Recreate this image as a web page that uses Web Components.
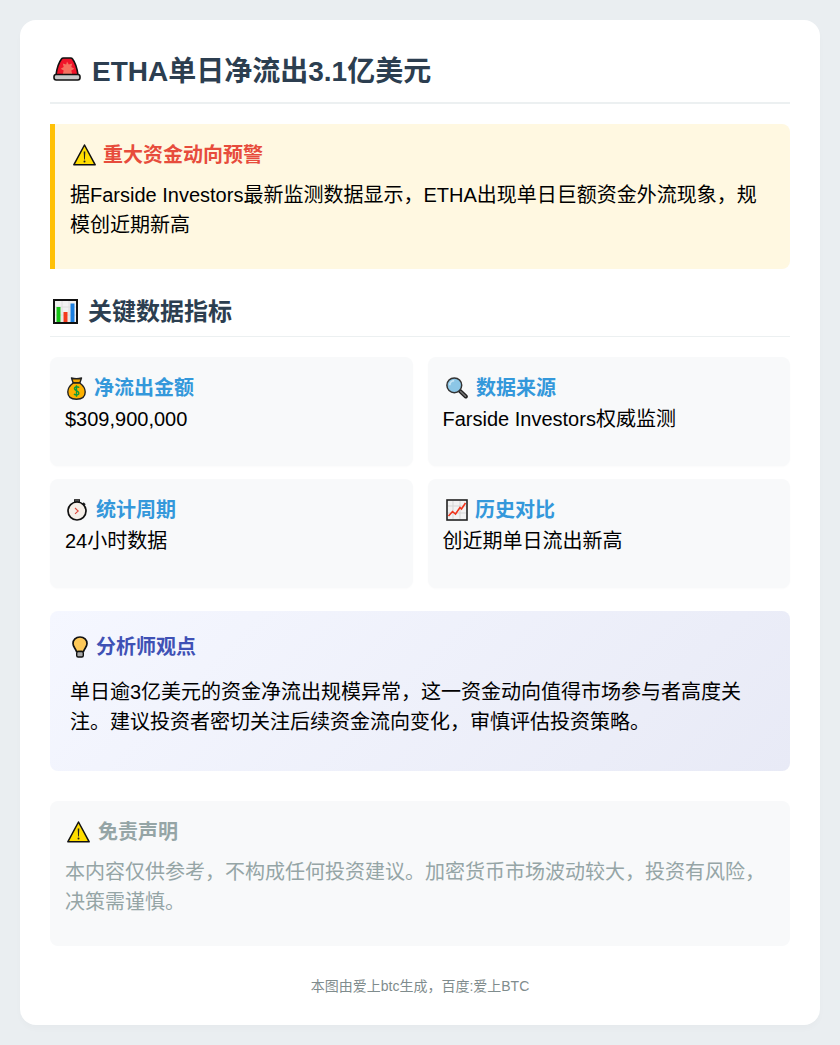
<!DOCTYPE html>
<html lang="zh">
<head>
<meta charset="utf-8">
<title>ETHA单日净流出3.1亿美元</title>
<style>
  html, body { margin: 0; }
  body {
    background: #eaeef1;
    padding: 20px;
    font-family: "Liberation Sans", "Noto Sans CJK SC", sans-serif;
    font-size: 20px;
    color: #000;
  }
</style>
</head>
<body>
<report-card>
  <report-title slot="title" icon="siren">ETHA单日净流出3.1亿美元</report-title>

  <alert-box>
    <span slot="title">重大资金动向预警</span>
    据Farside Investors最新监测数据显示，ETHA出现单日巨额资金外流现象，规模创近期新高
  </alert-box>

  <section-head icon="chart">关键数据指标</section-head>

  <stat-grid>
    <stat-item icon="money" inset="2" gap="8" label="净流出金额">$309,900,000</stat-item>
    <stat-item icon="search" inset="3" gap="8.5" label="数据来源">Farside Investors权威监测</stat-item>
    <stat-item icon="timer" inset="2" gap="9" label="统计周期">24小时数据</stat-item>
    <stat-item icon="trend" inset="3" gap="7.5" label="历史对比">创近期单日流出新高</stat-item>
  </stat-grid>

  <analyst-box>
    <span slot="title">分析师观点</span>
    单日逾3亿美元的资金净流出规模异常，这一资金动向值得市场参与者高度关注。建议投资者密切关注后续资金流向变化，审慎评估投资策略。
  </analyst-box>

  <disclaimer-box>
    <span slot="title">免责声明</span>
    本内容仅供参考，不构成任何投资建议。加密货币市场波动较大，投资有风险，决策需谨慎。
  </disclaimer-box>

  <report-footer>本图由爱上btc生成，百度:爱上BTC</report-footer>
</report-card>

<script>
const ICONS = {
  siren: `<svg viewBox="0 0 28 24" width="28" height="24">
    <path d="M8.500 2Q9 1 10.500 1H17.500Q19 1 19.500 2Q23.500 7 25 18H3Q4.500 7 8.500 2Z" fill="#f0142a" stroke="#111" stroke-width="1.600" stroke-linejoin="round"/>
    <path d="M14 4.500l1.800 3 3.400-1-.9 3.400 3 1.800-3 1.800.9 3.500H9.800l.9-3.500-3-1.800 3-1.800-.9-3.400 3.400 1z" fill="#f6705f"/>
    <rect x="1" y="17.500" width="26" height="5.500" rx="2.200" fill="#c9c9c9" stroke="#111" stroke-width="1.600"/>
  </svg>`,
  warn: `<svg viewBox="0 0 23 22" width="23" height="22">
    <path d="M11.500 1L22.200 20.800H.8Z" fill="#ffdd00" stroke="#111" stroke-width="1.500" stroke-linejoin="round"/>
    <path d="M10.700 7.500h1.600l-.4 8h-.8z" fill="#222"/><circle cx="11.500" cy="17.600" r="1" fill="#222"/>
  </svg>`,
  chart: `<svg viewBox="0 0 25 25" width="25" height="25">
    <rect x="1" y="1" width="23" height="23" fill="#f1f1f1" stroke="#111" stroke-width="2"/>
    <path d="M2 8H23M2 16H23M9 2V23M16 2V23" stroke="#dedede" stroke-width="1"/>
    <rect x="3.500" y="8" width="4" height="15" fill="#18c418"/>
    <rect x="10.500" y="13" width="4" height="10" fill="#f43a1c"/>
    <rect x="17.500" y="4.500" width="4" height="18.500" fill="#1b7fe0"/>
  </svg>`,
  money: `<svg viewBox="0 0 19 23" width="19" height="23">
    <path d="M4.500 1Q9.500 2.600 14.500 1L12.800 6H6.200Z" fill="#f5a800" stroke="#222" stroke-width="1.400" stroke-linejoin="round"/>
    <path d="M6.200 6H12.800Q18.200 10 18.200 15Q18.200 22.200 9.500 22.200Q.8 22.200 .8 15Q.8 10 6.200 6Z" fill="#fdb100" stroke="#222" stroke-width="1.400"/>
    <path d="M12.300 10.500Q9.500 9 7.800 10.500Q6.600 12.200 9.500 13.700Q12.700 15.200 11.500 17.300Q9.500 18.800 6.900 17.200M9.500 8.200V19.800" fill="none" stroke="#0a9a3c" stroke-width="1.400"/>
  </svg>`,
  search: `<svg viewBox="0 0 22 22" width="22" height="22">
    <path d="M13.500 13.500L19.800 19.500" stroke="#222" stroke-width="4" stroke-linecap="round"/>
    <path d="M14.500 14.500L19.500 19.200" stroke="#777" stroke-width="1.500" stroke-linecap="round"/>
    <circle cx="8.300" cy="8.300" r="7.400" fill="#8cc6e6" stroke="#333" stroke-width="1.500"/>
    <path d="M3.700 8.200A4.600 4.600 0 0 1 8.200 3.700" fill="none" stroke="#c7e5f5" stroke-width="1.800"/>
  </svg>`,
  timer: `<svg viewBox="0 0 20 22" width="20" height="22">
    <rect x="7.500" y="0.700" width="5" height="2.300" fill="#555" stroke="#222"/>
    <path d="M16 4L18 6" stroke="#222" stroke-width="2"/>
    <circle cx="10" cy="12" r="9" fill="#f6efe8" stroke="#111" stroke-width="1.700"/>
    <path d="M8 9L11.200 12L8 14.800" fill="none" stroke="#e0473c" stroke-width="1.100"/>
  </svg>`,
  trend: `<svg viewBox="0 0 22 22" width="22" height="22">
    <rect x="1" y="1" width="20" height="20" fill="#f2f2f2" stroke="#222" stroke-width="1.600"/>
    <path d="M2 7H20M2 14H20M7 2V20M14 2V20" stroke="#d5d5d5" stroke-width="1"/>
    <path d="M2.500 17L6.500 12.500L9.500 15L14 8.500L15.500 10L19.500 4" fill="none" stroke="#f0351c" stroke-width="1.600"/>
  </svg>`,
  bulb: `<svg viewBox="0 0 16 22" width="16" height="22">
    <path d="M8 1C3.800 1 1 3.900 1 7.600C1 10.800 3.300 12 4.500 15.500H11.500C12.700 12 15 10.800 15 7.600C15 3.900 12.200 1 8 1Z" fill="#fdc858" stroke="#111" stroke-width="1.700"/>
    <rect x="4.700" y="15.500" width="6.600" height="5.500" rx="1.500" fill="#a8a8a8" stroke="#111" stroke-width="1.400"/>
  </svg>`
};

// builds one open shadow root from a css + html pair
class BaseEl extends HTMLElement {
  constructor() {
    super();
    this.attachShadow({ mode: "open" });
  }
  render(css, html) {
    this.shadowRoot.innerHTML = `<style>${css}</style>${html}`;
  }
}

class EmojiIcon extends BaseEl {
  connectedCallback() {
    this.render(
      `:host { display: inline-flex; flex: none; } svg { display: block; }`,
      ICONS[this.getAttribute("name")] || ""
    );
  }
}

class ReportCard extends BaseEl {
  connectedCallback() {
    this.render(
      `:host {
        display: block;
        background: #fff;
        border-radius: 16px;
        padding: 30px;
        height: 945px;
        box-shadow: 0 4px 6px rgba(0, 0, 0, 0.02);
      }`,
      `<slot name="title"></slot><slot></slot>`
    );
  }
}

class ReportTitle extends BaseEl {
  connectedCallback() {
    this.render(
      `:host {
        display: flex;
        align-items: center;
        gap: 11px;
        height: 38px;
        padding: 0 0 14px;
        margin-bottom: 20px;
        border-bottom: 2px solid #ecf0f1;
        font-size: 28px;
        font-weight: 700;
        color: #2c3e50;
      }
      emoji-icon { margin: 0 0 0 3px; }`,
      `<emoji-icon name="${this.getAttribute("icon")}"></emoji-icon><slot></slot>`
    );
  }
}

class AlertBox extends BaseEl {
  connectedCallback() {
    this.render(
      `:host {
        display: block;
        box-sizing: border-box;
        height: 145px;
        background: #fff8e1;
        border-left: 5px solid #ffc107;
        border-radius: 0 8px 8px 0;
        padding: 16px 30px 0 15px;
        line-height: 30px;
      }
      h3 {
        display: flex;
        align-items: center;
        gap: 7px;
        margin: 0 0 10px;
        font-size: 20px;
        color: #e74c3c;
      }
      emoji-icon { margin-left: 3px; }`,
      `<h3><emoji-icon name="warn"></emoji-icon><slot name="title"></slot></h3><slot></slot>`
    );
  }
}

class SectionHead extends BaseEl {
  connectedCallback() {
    this.render(
      `:host {
        display: flex;
        align-items: center;
        gap: 10px;
        height: 32px;
        margin: 24px 0 20px;
        padding-bottom: 11px;
        border-bottom: 1px solid #ecf0f1;
        font-size: 24px;
        font-weight: 700;
        color: #2c3e50;
      }
      emoji-icon { margin: 5px 0 0 3px; }`,
      `<emoji-icon name="${this.getAttribute("icon")}"></emoji-icon><slot></slot>`
    );
  }
}

class StatGrid extends BaseEl {
  connectedCallback() {
    this.render(
      `:host {
        display: grid;
        grid-template-columns: 1fr 1fr;
        gap: 13.5px 15px;
      }`,
      `<slot></slot>`
    );
  }
}

class StatItem extends BaseEl {
  connectedCallback() {
    this.render(
      `:host {
        display: block;
        height: 108.5px;
        box-sizing: border-box;
        background: #f8f9fa;
        border-radius: 8px;
        padding: 16px 15px 15px;
        line-height: 30px;
        box-shadow: 0 1px 2px rgba(0, 0, 0, 0.02);
      }
      h4 {
        display: flex;
        align-items: center;
        gap: ${this.getAttribute("gap") || 8}px;
        margin: 0 0 1px;
        font-size: 20px;
        color: #3498db;
      }
      emoji-icon { margin-left: ${this.getAttribute("inset") || 2}px; }`,
      `<h4><emoji-icon name="${this.getAttribute("icon")}"></emoji-icon>${this.getAttribute("label")}</h4><slot></slot>`
    );
  }
}

class AnalystBox extends BaseEl {
  connectedCallback() {
    this.render(
      `:host {
        display: block;
        margin-top: 23.5px;
        height: 160px;
        box-sizing: border-box;
        background: linear-gradient(135deg, #f5f7ff 0%, #e8eaf6 100%);
        border-radius: 8px;
        padding: 21px 40px 20px 20px;
        line-height: 30px;
      }
      h3 {
        display: flex;
        align-items: center;
        gap: 8px;
        margin: 0 0 15px;
        font-size: 20px;
        color: #3f51b5;
      }
      emoji-icon { margin-left: 2px; }`,
      `<h3><emoji-icon name="bulb"></emoji-icon><slot name="title"></slot></h3><slot></slot>`
    );
  }
}

class DisclaimerBox extends BaseEl {
  connectedCallback() {
    this.render(
      `:host {
        display: block;
        margin-top: 30px;
        height: 145px;
        box-sizing: border-box;
        background: #f8f9fa;
        border-radius: 8px;
        padding: 16px 15px 15px;
        line-height: 30px;
        color: #95a5a6;
      }
      h3 {
        display: flex;
        align-items: center;
        gap: 8px;
        margin: 0 0 10px;
        font-size: 20px;
        color: #95a5a6;
      }
      emoji-icon { margin-left: 2px; }`,
      `<h3><emoji-icon name="warn"></emoji-icon><slot name="title"></slot></h3><slot></slot>`
    );
  }
}

class ReportFooter extends BaseEl {
  connectedCallback() {
    this.render(
      `:host {
        display: block;
        margin-top: 30px;
        text-align: center;
        font-size: 14px;
        line-height: 20px;
        color: #7f8c8d;
      }`,
      `<slot></slot>`
    );
  }
}

customElements.define("emoji-icon", EmojiIcon);
customElements.define("report-card", ReportCard);
customElements.define("report-title", ReportTitle);
customElements.define("alert-box", AlertBox);
customElements.define("section-head", SectionHead);
customElements.define("stat-grid", StatGrid);
customElements.define("stat-item", StatItem);
customElements.define("analyst-box", AnalystBox);
customElements.define("disclaimer-box", DisclaimerBox);
customElements.define("report-footer", ReportFooter);
</script>
</body>
</html>
